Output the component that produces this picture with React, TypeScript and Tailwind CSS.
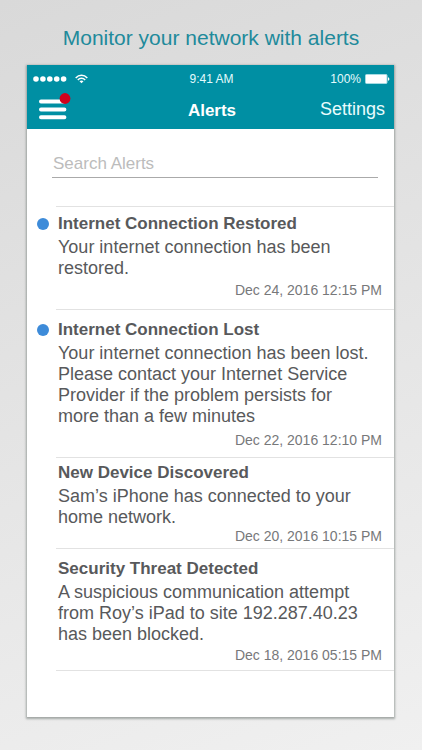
type Alert = {
  title: string;
  body: string;
  date: string;
  unread: boolean;
  spacing: string;
  dateSpacing: string;
};

const alerts: Alert[] = [
  {
    title: "Internet Connection Restored",
    body: "Your internet connection has been restored.",
    date: "Dec 24, 2016 12:15 PM",
    unread: true,
    spacing: "pt-[6px] pb-[11px]",
    dateSpacing: "mt-[3px]",
  },
  {
    title: "Internet Connection Lost",
    body: "Your internet connection has been lost. Please contact your Internet Service Provider if the problem persists for more than a few minutes",
    date: "Dec 22, 2016 12:10 PM",
    unread: true,
    spacing: "pt-[9px] pb-[9px]",
    dateSpacing: "mt-[5px]",
  },
  {
    title: "New Device Discovered",
    body: "Sam’s iPhone has connected to your home network.",
    date: "Dec 20, 2016 10:15 PM",
    unread: false,
    spacing: "pt-[4px] pb-[4px]",
    dateSpacing: "mt-0",
  },
  {
    title: "Security Threat Detected",
    body: "A suspicious communication attempt from Roy’s iPad to site 192.287.40.23 has been blocked.",
    date: "Dec 18, 2016 05:15 PM",
    unread: false,
    spacing: "pt-[9px] pb-[7px]",
    dateSpacing: "mt-[2px]",
  },
];

function StatusBar() {
  return (
    <div className="grid h-7 grid-cols-3 items-center pl-1.5 pr-1 text-xs text-[#e4fbfd]">
      <div className="flex items-center gap-2">
        <svg width="34" height="6" viewBox="0 0 34 6" fill="#fff" aria-hidden="true">
          <circle cx="3" cy="3" r="2.8" />
          <circle cx="9.9" cy="3" r="2.8" />
          <circle cx="16.8" cy="3" r="2.8" />
          <circle cx="23.7" cy="3" r="2.8" />
          <circle cx="30.6" cy="3" r="2.8" />
        </svg>
        <svg width="13" height="10" viewBox="0 0 13 10" fill="none" stroke="#fff" strokeWidth="1.5" aria-hidden="true">
          <path d="M0.7 3.9C4 0.3 9 0.3 12.3 3.9" />
          <path d="M2.8 6C5 3.7 8 3.7 10.2 6" />
          <path d="M6.5 9.2L4.5 7.2C5.6 6.1 7.4 6.1 8.5 7.2Z" fill="#fff" stroke="none" />
        </svg>
      </div>
      <div className="text-center">9:41 AM</div>
      <div className="flex items-center justify-end gap-1">
        100%
        <svg width="25" height="10" viewBox="0 0 25 10" aria-hidden="true">
          <rect x="0.5" y="0.5" width="21.5" height="9" rx="1" fill="#fff" stroke="#a5dbe2" />
          <path d="M23 3.2C24.8 3.5 24.8 6.5 23 6.8Z" fill="#fff" />
        </svg>
      </div>
    </div>
  );
}

function AlertRow({ alert }: { alert: Alert }) {
  return (
    <li className="flex">
      <div className="w-[29px] shrink-0 pl-[10px]">
        {alert.unread && (
          <div className={`border-t border-transparent ${alert.spacing}`}>
            <div className="flex h-[22px] items-center">
              <span className="size-3 rounded-full bg-[#3d8bd9]" role="img" aria-label="Unread" />
            </div>
          </div>
        )}
      </div>
      <article className={`min-w-0 grow border-t border-[#e2e2e2] pl-[2px] pr-3 ${alert.spacing}`}>
        <h2 className="text-[17px] leading-[22px] font-bold text-[#58595b]">{alert.title}</h2>
        <p className="mt-0.5 pr-2 text-[18px] leading-[21px] text-[#58595b]">{alert.body}</p>
        <time className={`block text-right text-[14px] leading-4 text-[#77787a] ${alert.dateSpacing}`}>
          {alert.date}
        </time>
      </article>
    </li>
  );
}

export default function App() {
  return (
    <div className="min-h-screen bg-linear-160 from-[#d9d9d9] to-[#f0f0f0] px-7 pb-8 font-['Liberation_Sans',Arial,sans-serif]">
      <h1 className="-mx-2 pt-[25px] pb-[14px] text-center text-[21px] leading-[26px] text-[#218a9b]">
        Monitor your network with alerts
      </h1>
      <main className="-ml-px bg-white pb-[45px] shadow-[0_1px_2px_1px_rgba(90,100,95,0.5)]">
        <header className="bg-[#008fa3]">
          <StatusBar />
          <div className="grid h-9 grid-cols-3 items-start pl-3 pr-[9px] text-white">
            <button type="button" aria-label="Menu" className="w-8">
              <svg width="32" height="28" viewBox="0 0 32 28" aria-hidden="true">
                <path d="M2 8.5H25.4M2 16.5H25.4M2 24.3H25.4" stroke="#fff" strokeWidth="4" strokeLinecap="round" />
                <circle cx="26" cy="5.5" r="5.4" fill="#d0021b" />
              </svg>
            </button>
            <div className="pt-1.5 text-center text-[17px] leading-6 font-bold">Alerts</div>
            <button type="button" className="justify-self-end pt-1 text-[18px] leading-6 text-[#e9fcfd]">
              Settings
            </button>
          </div>
        </header>
        <div className="pt-[22px] pr-4 pb-7 pl-[25px]">
          <input
            type="search"
            aria-label="Search Alerts"
            placeholder="Search Alerts"
            className="block h-[27px] w-full appearance-none border-b border-[#aaaaaa] bg-transparent pl-px text-[17px] outline-none placeholder:text-[#bcbcbc]"
          />
        </div>
        <ul className="border-b border-transparent">
          {alerts.map((alert) => (
            <AlertRow key={alert.title} alert={alert} />
          ))}
          <li className="ml-[29px] border-t border-[#e2e2e2]" aria-hidden="true" />
        </ul>
      </main>
    </div>
  );
}
